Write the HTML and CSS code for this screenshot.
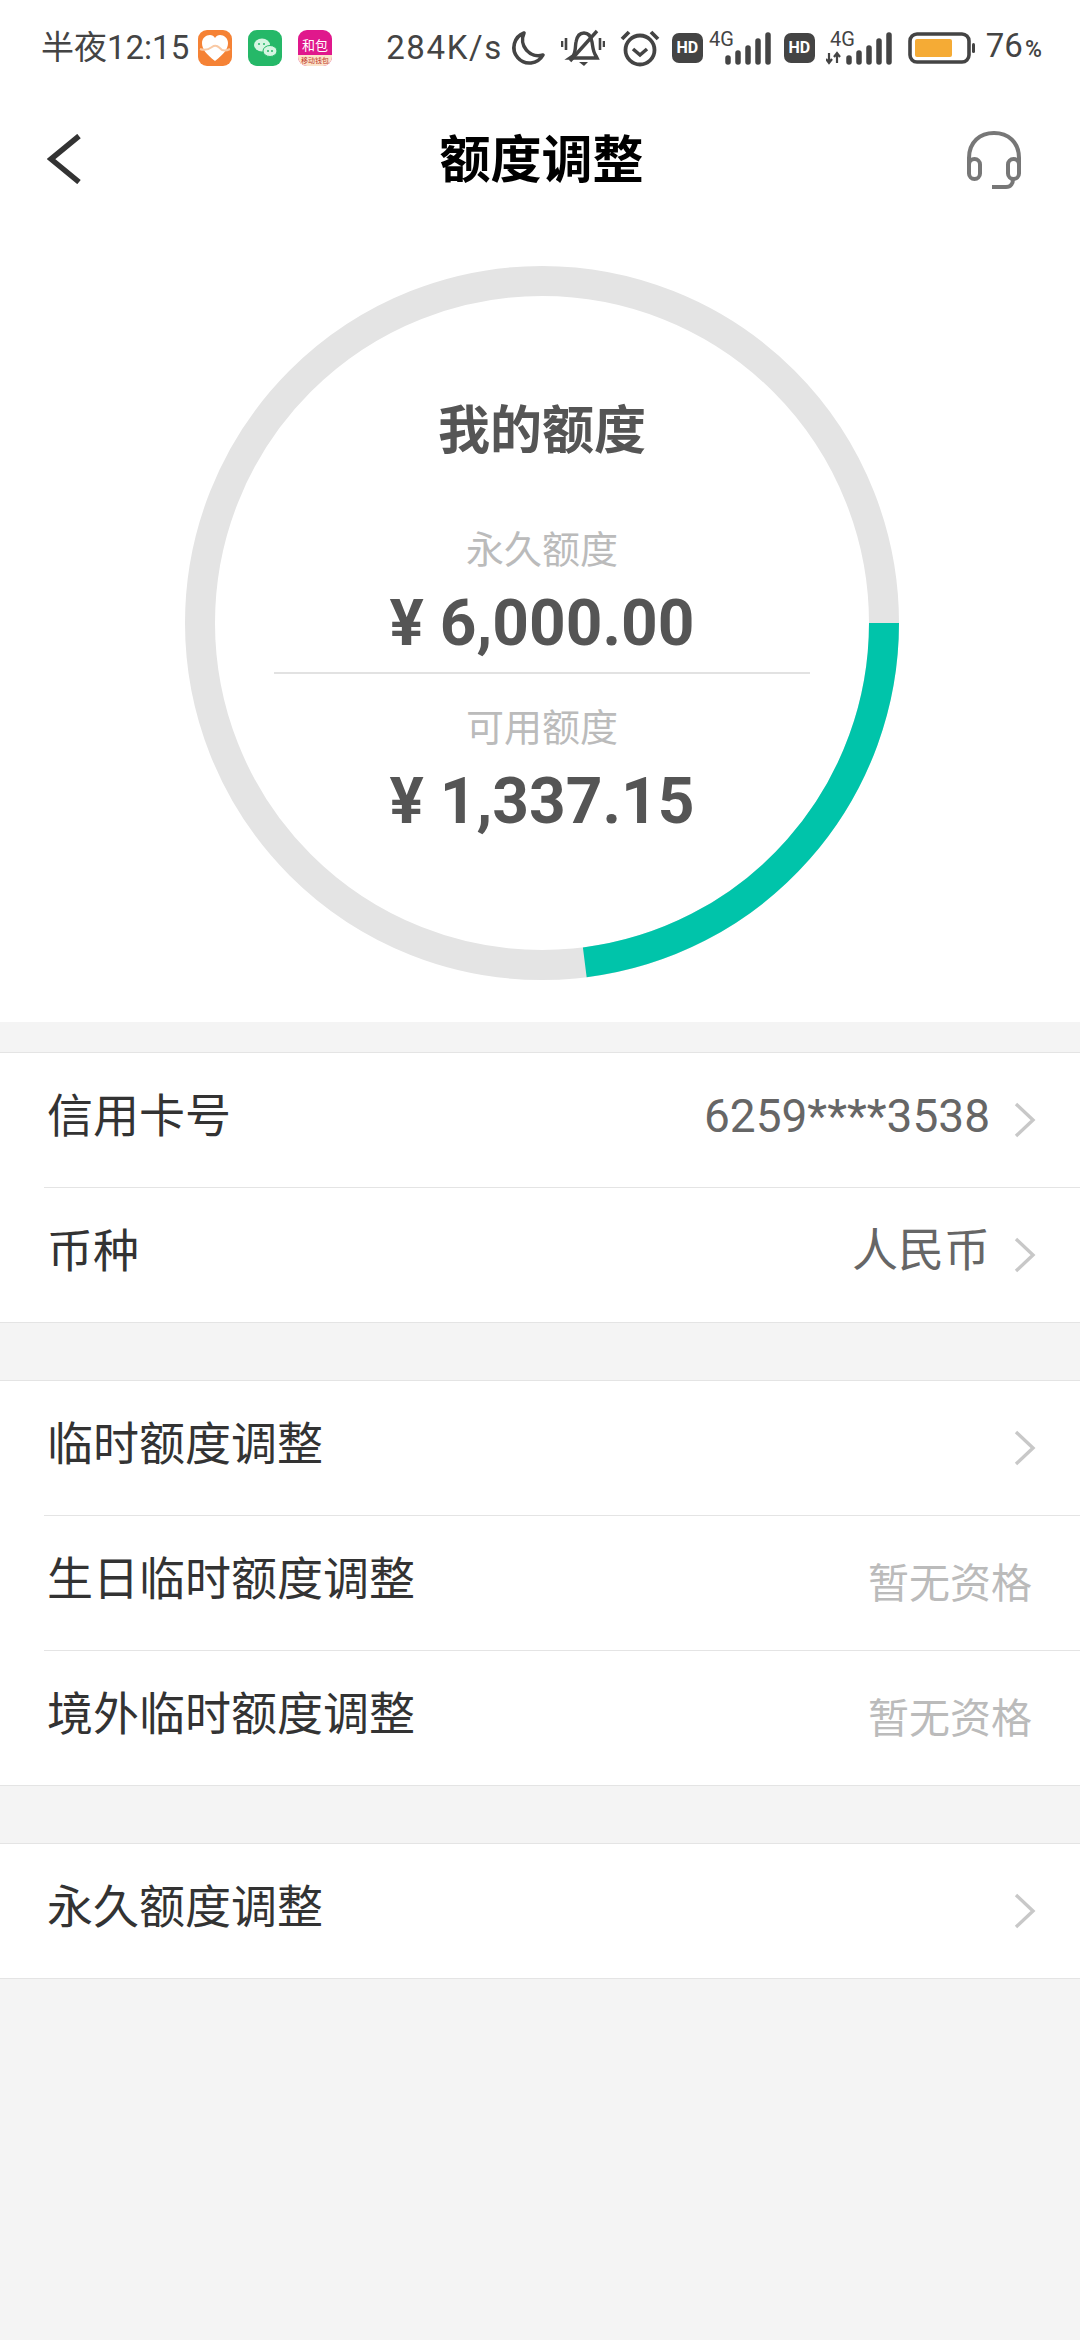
FILE: index.html
```html
<!DOCTYPE html>
<html lang="en">
<head>
    <meta charset="UTF-8">
    <meta name="viewport" content="width=device-width, initial-scale=1.0">
    <title>额度调整</title>
    <link rel="stylesheet" href="styles.css">
</head>
<body>
    <!-- Status bar -->
    <div class="status-bar">
        <span class="clock">半夜12:15</span>
        <svg class="app-icon first" viewBox="0 0 34 36"><rect width="34" height="36" rx="9" fill="#f58235"/><path d="M17 31 C8 24 4 19 4 13 C4 8 8 5 12 5 C14 5 16 6 17 8 C18 6 20 5 22 5 C26 5 30 8 30 13 C30 19 26 24 17 31Z" fill="#fff"/><path d="M2 19 C7 21 10 20 14 17 C18 14 21 17 24 20 C27 21 30 20 32 19" fill="none" stroke="#f9c9a4" stroke-width="2"/></svg>
        <svg class="app-icon" viewBox="0 0 34 36"><rect width="34" height="36" rx="9" fill="#25b868"/><ellipse cx="14" cy="15" rx="8" ry="6.5" fill="#d6f5e2"/><ellipse cx="22" cy="21" rx="7" ry="5.5" fill="#d6f5e2" stroke="#25b868"/><circle cx="11" cy="14" r="1" fill="#25b868"/><circle cx="16" cy="14" r="1" fill="#25b868"/><circle cx="20" cy="21" r="1" fill="#25b868"/><circle cx="24" cy="21" r="1" fill="#25b868"/></svg>
        <svg class="app-icon" viewBox="0 0 34 36"><rect width="34" height="36" rx="9" fill="#e0188c"/><path d="M0 25 H34 V27 A9 9 0 0 1 25 36 H9 A9 9 0 0 1 0 27Z" fill="#fbe3c9"/><text x="17" y="20" class="app-text">和包</text><text x="17" y="33" class="app-sub">移动钱包</text></svg>
        <span class="speed">284K/s</span>
        <svg class="moon" viewBox="0 0 36 36"><path d="M14 3 A15.5 15.5 0 1 0 33 25 A16 16 0 0 1 14 3Z" fill="none" stroke="#444" stroke-width="3.6" stroke-linejoin="round"/></svg>
        <svg class="bell" viewBox="0 0 44 38"><path d="M12 27 C15 23 14 18 15 13 C16 7 19 4 23 4 C27 4 30 7 31 13 C32 19 32 23 35 27 L36 29 H9Z" fill="none" stroke="#444" stroke-width="3.4"/><path d="M18 33 H27 L23 37Z" fill="#444"/><path d="M9 32 L36 2" stroke="#444" stroke-width="3.4"/><path d="M1 12 V18 M5 9 V21 M39 9 V21 M43 12 V18" stroke="#444" stroke-width="2.6"/></svg>
        <svg class="alarm" viewBox="0 0 40 38"><circle cx="20" cy="21" r="14.5" fill="none" stroke="#444" stroke-width="3.8"/><path d="M13 20 L20 26 L27 20" fill="none" stroke="#444" stroke-width="3.6"/><path d="M2 10 L9 3 M38 10 L31 3" stroke="#444" stroke-width="3.8"/></svg>
        <span class="hd">HD</span>
        <svg class="signal" viewBox="0 -6 63 46"><text x="0" y="15" class="net-text">4G</text><path d="M19 31 v-4 M29 31 v-9 M39 31 v-14 M49 31 v-21 M59 31 v-27" stroke="#444" stroke-width="5.5" stroke-linecap="round"/></svg>
        <span class="hd">HD</span>
        <svg class="signal wide" viewBox="0 -6 67 46"><text x="4" y="15" class="net-text">4G</text><path d="M3 22 v10 M0 28 l3 4 l3 -4 M11 32 v-10 M8 26 l3 -4 l3 4" fill="none" stroke="#444" stroke-width="2.2"/><path d="M23 31 v-4 M33 31 v-9 M43 31 v-14 M53 31 v-21 M63 31 v-27" stroke="#444" stroke-width="5.5" stroke-linecap="round"/></svg>
        <svg class="battery" viewBox="0 0 68 32"><rect x="2" y="2" width="59" height="28" rx="7" fill="none" stroke="#444" stroke-width="3.6"/><rect x="7" y="7" width="37" height="18" rx="2" fill="#f5ab35"/><rect x="64" y="11" width="3" height="10" rx="1.5" fill="#444"/></svg>
        <span class="percent">76<small>%</small></span>
    </div>

    <!-- Title bar -->
    <div class="nav-bar">
        <svg class="back" viewBox="0 0 34 50"><path d="M32 2 L4 25 L32 48" fill="none" stroke="#333" stroke-width="5.5"/></svg>
        <h1>额度调整</h1>
        <svg class="headset" viewBox="0 0 56 58"><path d="M3 36 V27 C3 11 14 2 28 2 C42 2 53 11 53 27 V36" fill="none" stroke="#777" stroke-width="4"/><rect x="3" y="28" width="11" height="20" rx="5.5" fill="none" stroke="#777" stroke-width="4"/><rect x="42" y="28" width="11" height="20" rx="5.5" fill="none" stroke="#777" stroke-width="4"/><path d="M26 56 H40 C45 56 47 52 47 48" fill="none" stroke="#777" stroke-width="4"/></svg>
    </div>

    <!-- Limit ring -->
    <div class="hero">
        <div class="ring-wrap">
            <svg class="ring" viewBox="0 0 714 714">
                <circle cx="357" cy="357" r="342" fill="none" stroke="#e4e4e4" stroke-width="30"/>
                <circle cx="357" cy="357" r="342" fill="none" stroke="#00c4aa" stroke-width="30" stroke-dasharray="494 2149"/>
            </svg>
            <div class="ring-text">
                <h2>我的额度</h2>
                <div class="limit-label">永久额度</div>
                <div class="limit-value">¥ 6,000.00</div>
                <div class="ring-line"></div>
                <div class="limit-label second">可用额度</div>
                <div class="limit-value">¥ 1,337.15</div>
            </div>
        </div>
    </div>

    <div class="group">
        <div class="row">
            <span class="row-name">信用卡号</span>
            <span class="row-value">6259****3538</span>
            <svg class="chevron" viewBox="0 0 22 36"><path d="M2 2 L19 18 L2 34" fill="none" stroke="#c8c8c8" stroke-width="3.4"/></svg>
        </div>
        <div class="row">
            <span class="row-name">币种</span>
            <span class="row-value currency">人民币</span>
            <svg class="chevron" viewBox="0 0 22 36"><path d="M2 2 L19 18 L2 34" fill="none" stroke="#c8c8c8" stroke-width="3.4"/></svg>
        </div>
    </div>

    <div class="group">
        <div class="row">
            <span class="row-name">临时额度调整</span>
            <svg class="chevron" viewBox="0 0 22 36"><path d="M2 2 L19 18 L2 34" fill="none" stroke="#c8c8c8" stroke-width="3.4"/></svg>
        </div>
        <div class="row">
            <span class="row-name">生日临时额度调整</span>
            <span class="row-note">暂无资格</span>
        </div>
        <div class="row">
            <span class="row-name">境外临时额度调整</span>
            <span class="row-note">暂无资格</span>
        </div>
    </div>

    <div class="group">
        <div class="row">
            <span class="row-name">永久额度调整</span>
            <svg class="chevron" viewBox="0 0 22 36"><path d="M2 2 L19 18 L2 34" fill="none" stroke="#c8c8c8" stroke-width="3.4"/></svg>
        </div>
    </div>
</body>
</html>
```

FILE: styles.css
```css
/* Credit limit page */
body {
    font-family: Roboto, "Noto Sans CJK SC", sans-serif;
    margin: 0;
    padding: 0;
    height: 2340px;
    overflow: hidden;
    background-color: #f4f4f4;
}

/* Status bar */
.status-bar {
    display: flex;
    align-items: center;
    height: 88px;
    padding: 8px 0 0 41px;
    box-sizing: border-box;
    background-color: white;
    color: #444;
}

.clock, .speed {
    font-size: 33px;
    line-height: 40px;
    white-space: nowrap;
}

.speed {
    margin-left: 54px;
    letter-spacing: 1.6px;
}

.app-icon {
    width: 34px;
    height: 36px;
    margin-left: 16px;
}

.app-icon.first {
    margin-left: 9px;
}

.app-text {
    font-size: 13px;
    fill: #fff;
    text-anchor: middle;
}

.app-sub {
    font-size: 7px;
    fill: #c0392b;
    text-anchor: middle;
}

.moon {
    width: 36px;
    height: 36px;
    margin-left: 7px;
}

.bell {
    width: 44px;
    height: 38px;
    margin-left: 15px;
}

.alarm {
    width: 40px;
    height: 38px;
    margin-left: 15px;
}

.hd {
    width: 31px;
    height: 30px;
    margin-left: 12px;
    border-radius: 7px;
    background-color: #444;
    color: white;
    font-size: 16px;
    font-weight: 700;
    line-height: 30px;
    text-align: center;
}

.signal {
    width: 63px;
    height: 46px;
    margin-left: 6px;
}

.signal.wide {
    width: 67px;
    margin-left: 11px;
}

.net-text {
    font-size: 20px;
    fill: #444;
}

.battery {
    width: 68px;
    height: 32px;
    margin-left: 15px;
}

.percent {
    margin-left: 10px;
    font-size: 33px;
    line-height: 40px;
}

.percent small {
    font-size: 23px;
    font-weight: 500;
    margin-left: 2px;
}

/* Title bar */
.nav-bar {
    display: grid;
    grid-template-columns: 1fr auto 1fr;
    align-items: center;
    height: 144px;
    padding: 0 58px 0 47px;
    background-color: white;
}

.nav-bar h1 {
    margin: 0 0 8px 14px;
    font-size: 51px;
    font-weight: 700;
    color: #000;
}

.back {
    width: 34px;
    height: 50px;
    margin-bottom: 2px;
}

.headset {
    width: 56px;
    height: 58px;
    justify-self: end;
}

/* Limit ring */
.hero {
    display: flex;
    justify-content: center;
    padding: 34px 0 42px 4px;
    background-color: white;
}

.ring-wrap {
    display: grid;
    width: 714px;
    height: 714px;
}

.ring, .ring-text {
    grid-area: 1 / 1;
}

.ring {
    width: 714px;
    height: 714px;
}

.ring-text {
    display: flex;
    flex-direction: column;
    align-items: center;
    padding-top: 136px;
}

.ring-text h2 {
    margin: 0 0 63px;
    font-size: 52px;
    line-height: 60px;
    font-weight: 700;
    color: #555;
}

.limit-label {
    font-size: 38px;
    line-height: 50px;
    color: #bbb;
}

.limit-label.second {
    margin-top: 29px;
}

.limit-value {
    margin-top: 14px;
    font-size: 64px;
    line-height: 70px;
    font-weight: 700;
    color: #555;
}

.ring-line {
    width: 536px;
    height: 2px;
    margin-top: 13px;
    background-color: #e2e2e2;
}

/* List groups */
.group {
    margin-top: 30px;
    background-color: white;
    border-top: 1px solid #e4e4e4;
    border-bottom: 1px solid #e4e4e4;
}

.group + .group {
    margin-top: 57px;
}

.row {
    display: flex;
    align-items: center;
    height: 134px;
    margin-left: 44px;
    padding-right: 44px;
    border-bottom: 1px solid #e4e4e4;
}

.row:last-child {
    border-bottom: none;
}

.row-name {
    flex: 1;
    margin: 0 0 16px 3px;
    font-size: 46px;
    color: #333;
}

.row-value {
    margin-bottom: 8px;
    font-size: 46px;
    color: #666;
}

.row-value.currency {
    margin-bottom: 18px;
}

.row-note {
    margin: 0 4px 6px 0;
    font-size: 41px;
    color: #bbb;
}

.chevron {
    width: 22px;
    height: 36px;
    margin-left: 24px;
}
```
